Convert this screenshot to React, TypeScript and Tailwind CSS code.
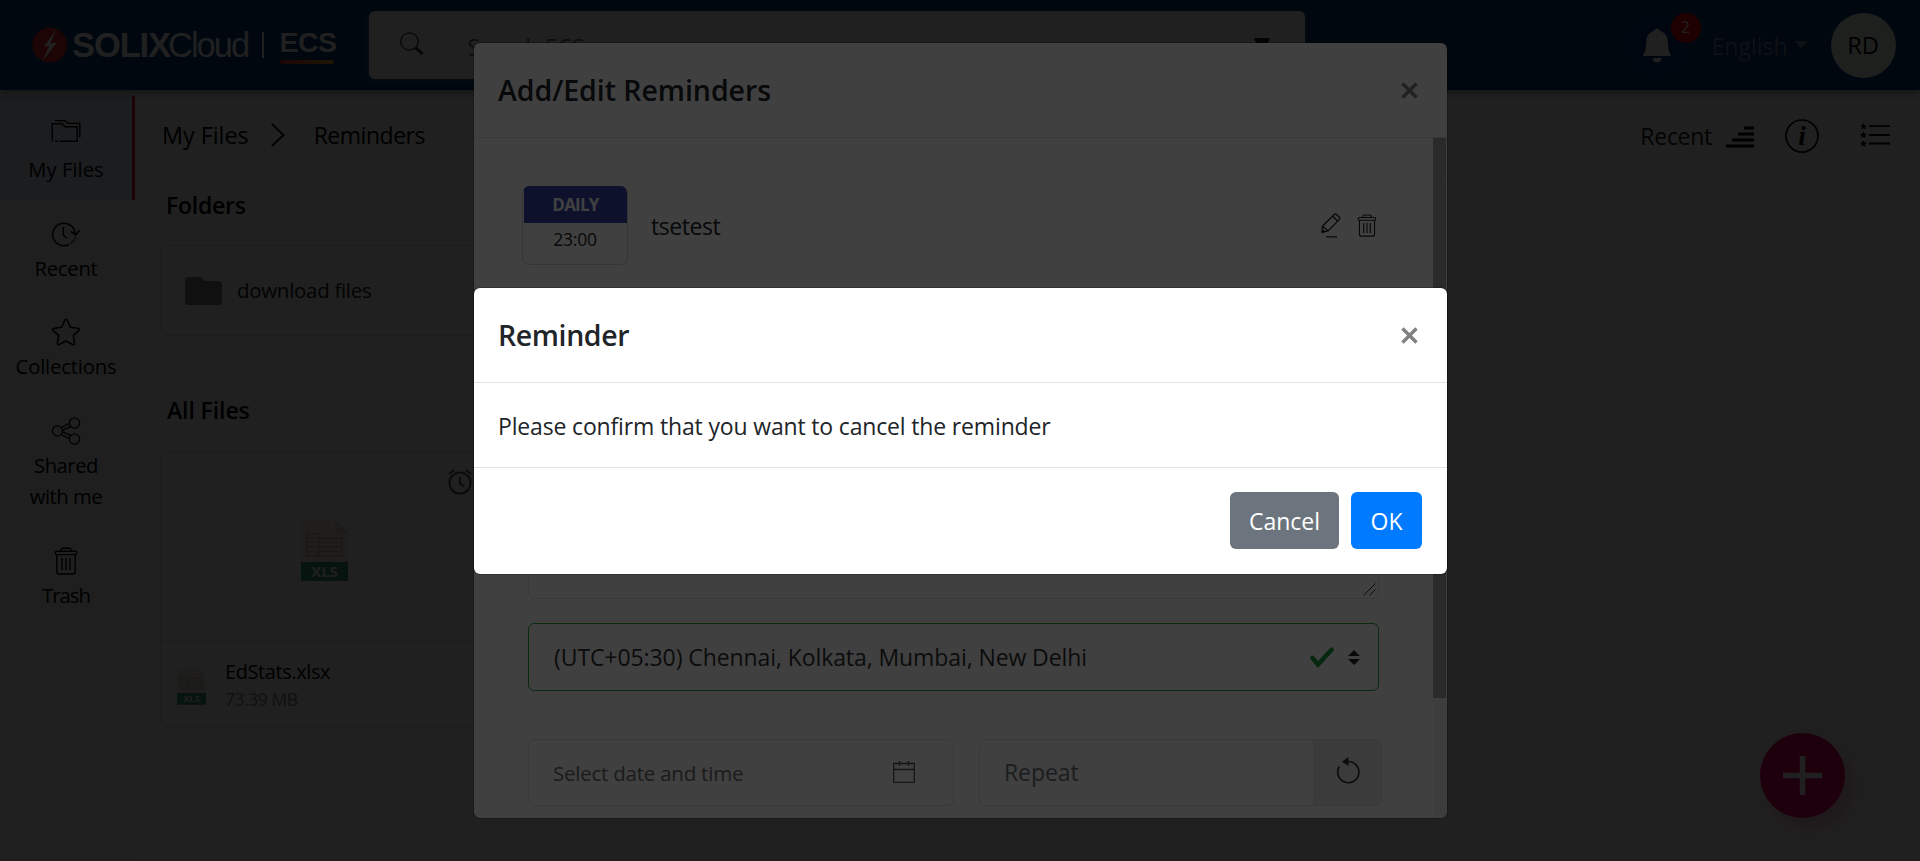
import React from 'react';

type IconProps = { className?: string };

const FolderOutline = ({ className }: IconProps) => (
  <svg className={className} width="30" height="24" viewBox="0 0 30 24" fill="none" stroke="currentColor" strokeWidth="1.4">
    <path d="M1.2 22.5V4.7h9.6l3 3h12.4V22.3H8.5M4 22.3h3" />
    <path d="M4 1.6h9.8l3.2 2.8h11.8v13.8" />
  </svg>
);

const RecentClock = () => (
  <svg width="30" height="26" viewBox="0 0 30 26" fill="none" stroke="currentColor" strokeWidth="1.5">
    <path d="M18.5 23.3A11.3 11.3 0 1 1 24.2 12.6" />
    <path d="M12.3 6v8l3.5 3M20 10.3l4.6 3.6 4-4.6" />
    <path d="M20 22.2l1.4-1M22.3 20.2l1-1.4M24 17.6l.5-1.4" />
  </svg>
);

const Star = () => (
  <svg width="30" height="28" viewBox="0 0 30 28" fill="none" stroke="currentColor" strokeWidth="1.6" strokeLinejoin="round">
    <path d="M15 1.3c.6 0 1 .5 1.3 1.2l3 6.8 7.5 1c1.6.3 2 1.2.9 2.3l-5.400 5.100 1.300 7.400c.2 1.500-.6 2-1.800 1.400L15 23l-6.800 3.500c-1.200.6-2 .1-1.800-1.400l1.300-7.400-5.400-5.100c-1.100-1.100-.7-2 .9-2.300l7.500-1 3-6.800c.3-.7.7-1.200 1.300-1.200z" />
  </svg>
);

const ShareNodes = () => (
  <svg width="30" height="28" viewBox="0 0 30 28" fill="none" stroke="currentColor" strokeWidth="1.3">
    <circle cx="6.500" cy="14" r="5.100" />
    <circle cx="23.500" cy="6" r="5.100" />
    <circle cx="23.500" cy="22" r="5.100" />
    <path d="M10.300 10.500l8.300-4.100M11.500 13.300l8.300-4M11.500 14.700l8.300 4M10.300 17.500l8.300 4.100" />
  </svg>
);

const TrashCan = ({ className }: IconProps) => (
  <svg className={className} width="24" height="28" viewBox="0 0 24 28" fill="none" stroke="currentColor" strokeWidth="1.4">
    <rect x="1.400" y="4.200" width="21.200" height="3.400" rx="1.400" />
    <path d="M7 4.200V3q0-1.800 1.800-1.800h6.400Q17 1.200 17 3v1.200M2.800 7.600V24.500q0 2.500 2.500 2.500h13.400q2.500 0 2.500-2.500V7.600M8 11v12M12 11v12M16 11v12" />
  </svg>
);

const XlsFile = ({ className }: IconProps) => (
  <svg className={className} viewBox="0 0 47 61">
    <path d="M1 0h33l13 13v29H0V1z" fill="#f4f2e6" />
    <path d="M34 0l13 13H34z" fill="#d8d5c4" />
    <path fill="none" stroke="#c4c1b0" strokeWidth="2" d="M6 14h12v22H6zM18 18h23v18H18M6 18h12M6 22.500h35M6 27h35M6 31.500h35" />
    <path d="M0 42h47v17.500q0 1.500-1.500 1.500h-44Q0 61 0 59.500z" fill="#108458" />
    <text x="23.500" y="57" textAnchor="middle" fontSize="15" fontWeight="700" fontFamily="Open Sans, sans-serif" fill="#f0f6ee">XLS</text>
  </svg>
);

const Close = () => (
  <svg width="17" height="17" viewBox="0 0 17 17" stroke="#808080" strokeWidth="3.400" fill="none">
    <path d="M1.500 1.500l14 14M15.500 1.500l-14 14" />
  </svg>
);

function SideItem({ icon, children, className }: { icon: React.ReactNode; children: React.ReactNode; className: string }) {
  return (
    <div className={`flex flex-col items-center text-center text-[20.3px] leading-[31px] ${className}`}>
      <div className="mb-[5px] flex h-7 items-center justify-center">{icon}</div>
      {children}
    </div>
  );
}

function Header() {
  return (
    <header className="relative z-10 flex h-[90px] shrink-0 items-center bg-[#003874] shadow-[0_2px_8px_rgba(0,0,0,0.45)]">
      <svg className="ml-8" width="36" height="36" viewBox="0 0 36 36">
        <circle cx="17.800" cy="18" r="17.500" fill="#e8202a" />
        <path d="M24.500 2L12 19.800l5.200-.8L10.500 34 24.800 15.400l-6.600 1.200z" fill="#fff" />
      </svg>
      <div className="ml-[4px] flex items-baseline font-['Liberation_Sans'] text-[34.500px] leading-[40px] text-white">
        <span className="w-[96px] font-bold tracking-[-1.100px]">SOLIX</span>
        <span className="w-[94px] tracking-[-2px]">Cloud</span>
      </div>
      <div className="h-[26px] w-[1.500px] bg-white" />
      <div className="ml-4 flex h-[38px] w-[56px] flex-col justify-between pt-[6px]">
        <span className="font-['Liberation_Sans'] text-[28.500px] leading-[20px] font-bold tracking-[-0.500px] text-white">ECS</span>
        <span className="h-1 w-[54px] rounded-full bg-gradient-to-r from-[#e8202a] to-[#f0b020]" />
      </div>
      <div className="ml-[33px] flex h-[68px] w-[936px] items-center rounded-md bg-white pl-[31px] shadow-[0_2px_6px_rgba(255,255,255,0.35)]">
        <svg width="24" height="24" viewBox="0 0 24 24" fill="none" stroke="#333" className="mt-[-2px]">
          <circle cx="9.500" cy="9.500" r="8.700" strokeWidth="1.300" />
          <path d="M15.500 15.500l7 6.500" strokeWidth="3" />
        </svg>
        <span className="ml-[44px] pt-[4px] text-[23px] tracking-[-0.200px] text-[#777]">Search ECS</span>
        <svg className="ml-auto mr-[35px] mt-[-3px]" width="16" height="12" viewBox="0 0 16 12">
          <path d="M1.200 0h13.600q1.500 1 .6 2.200L9 10.500q-1 1-2 0L.6 2.200Q-.3 1 1.200 0z" fill="#222" />
        </svg>
      </div>
      <div className="relative ml-[322px] flex size-[60px] items-center justify-center rounded-full bg-[#00307c]">
        <svg width="30" height="36" viewBox="0 0 30 36" fill="#fff" className="mt-px">
          <path d="M15 .5c1.400 0 2.300.9 2.500 2.300 5 1.200 8 5 8.300 10.700.2 6.500.7 10.500 3.700 14.500H.5c3-4 3.500-8 3.700-14.500C4.500 7.800 7.500 4 12.500 2.800 12.700 1.400 13.600.5 15 .5zM10.500 30h9q-.5 4.500-4.500 4.500T10.500 30z" />
        </svg>
        <span className="absolute left-[44px] top-[-2px] flex size-[30px] items-center justify-center rounded-full bg-[#f80000] text-[15.500px] text-white">2</span>
      </div>
      <span className="ml-[25px] pt-[2px] text-[23px] text-[#7886a4]">English</span>
      <svg className="ml-[6px] mt-[-1px]" width="14" height="7" viewBox="0 0 14 7">
        <path d="M0 0h14L7 7z" fill="#7886a4" />
      </svg>
      <div className="ml-[23px] flex size-[65px] items-center justify-center rounded-full bg-[#f4fff4] pt-[2px] text-[23.700px] text-black">RD</div>
    </header>
  );
}

function Sidebar() {
  return (
    <nav className="w-[135px] shrink-0 bg-[#fafafa] pt-1.5 text-black">
      <SideItem className="h-[104px] border-r-[3px] border-[#e01020] bg-[#dce6f4] pt-[25px]" icon={<FolderOutline className="mt-[-9px]" />}>My Files</SideItem>
      <SideItem className="pr-[3px] pt-5 tracking-[-0.270px]" icon={<RecentClock />}>Recent</SideItem>
      <SideItem className="pr-[3px] pt-[34px] tracking-[-0.200px]" icon={<Star />}>Collections</SideItem>
      <SideItem className="pr-[3px] pt-[35px] tracking-[-0.500px]" icon={<ShareNodes />}>
        <span>Shared</span>
        <span>with me</span>
      </SideItem>
      <SideItem className="pr-[3px] pt-[35px] tracking-[-1px]" icon={<TrashCan />}>Trash</SideItem>
    </nav>
  );
}

function Browser() {
  return (
    <main className="flex min-w-0 flex-1 flex-col bg-white pl-[25px] pr-[17px] text-black">
      <div className="flex h-[90px] shrink-0 items-center border-b border-[#ededed]">
        <span className="ml-0.5 pt-[2px] text-[23.300px]">My Files</span>
        <svg className="ml-[22px]" width="14" height="24" viewBox="0 0 14 24" fill="none" stroke="currentColor" strokeWidth="1.800">
          <path d="M.8 .8L12.500 12 .8 23.200" />
        </svg>
        <span className="ml-[29px] pt-[2px] text-[23px] tracking-[-0.480px]">Reminders</span>
        <div className="ml-auto flex items-center">
          <span className="mt-1 text-[23px] tracking-[-0.280px] text-[#222]">Recent</span>
          <svg className="ml-[14px] mt-[5px]" width="28" height="22" viewBox="0 0 28 22">
            <path d="M18 .5h10v3H18zM12 6.500h16v3H12zM6 12.500h22v3H6zM0 18.500h28v3H0z" fill="#000" />
          </svg>
          <svg className="ml-[31px] mt-0.5" width="34" height="34" viewBox="0 0 34 34" fill="none" stroke="#000" strokeWidth="1.700">
            <circle cx="17" cy="17" r="16" />
            <text x="17" y="26" textAnchor="middle" fontSize="27" fontStyle="italic" fontWeight="bold" fontFamily="Liberation Serif, serif" fill="#000" stroke="none">i</text>
          </svg>
          <svg className="ml-[41px] mr-[13px]" width="30" height="24" viewBox="0 0 30 24">
            <path d="M9 3.200h21M9 12h21M9 20.500h21" stroke="#000" strokeWidth="1.800" />
            {[3.400, 12, 20.600].map((y) => (
              <path key={y} transform={`translate(3.500 ${y})`} d="M0-3.600L1-1.200l2.500.2-1.900 1.600.6 2.500L0 1.800l-2.200 1.300.6-2.500L-3.500-1-1-1.200z" fill="#000" />
            ))}
          </svg>
        </div>
      </div>
      <h2 className="ml-[6px] mt-[9px] h-[32px] text-[23px] leading-[32px] font-semibold tracking-[-0.230px]">Folders</h2>
      <div className="mt-[24px] flex h-[91px] w-[329px] shrink-0 items-center rounded-lg border border-[#e4e4e4] pl-[24px]">
        <svg width="37" height="28" viewBox="0 0 37 28" fill="#808080">
          <path d="M3 0h12.500l4 4H34q3 0 3 3v18q0 3-3 3H3q-3 0-3-3V3Q0 0 3 0z" />
        </svg>
        <span className="ml-[15px] text-[20.500px] tracking-[-0.300px] text-[#222]">download files</span>
      </div>
      <h2 className="ml-[7px] mt-[58px] h-[32px] text-[23px] leading-[32px] font-semibold tracking-[-0.100px]">All Files</h2>
      <div className="mt-[25px] flex h-[276px] w-[329px] shrink-0 flex-col rounded-lg border border-[#e4e4e4]">
        <div className="relative flex h-[190px] items-center justify-center border-b border-[#e4e4e4]">
          <XlsFile className="mt-[8px] h-[61px] w-[47px] opacity-80" />
          <svg className="absolute right-4 top-[17px]" width="24" height="26" viewBox="0 0 24 26" fill="none" stroke="#555" strokeWidth="2">
            <circle cx="12" cy="14" r="10.500" />
            <path d="M12 8v6.500l4.500 3M1 5l5-4M18 1l5 4" />
          </svg>
        </div>
        <div className="flex flex-1 pl-[16px] pt-[25px]">
          <XlsFile className="h-[38px] w-[29px] opacity-80" />
          <div className="ml-[19px] mt-[-9px]">
            <p className="text-[20px] leading-[28px] tracking-[-0.400px]">EdStats.xlsx</p>
            <p className="text-[17.500px] leading-[27px] tracking-[-0.450px] text-[#888]">73.39 MB</p>
          </div>
        </div>
      </div>
    </main>
  );
}

function RemindersModal() {
  return (
    <section className="absolute left-[473px] top-[42px] flex h-[777px] w-[975px] flex-col overflow-hidden rounded-[7px] border border-black/20 bg-white bg-clip-padding text-[#212529]">
      <header className="flex h-[95px] shrink-0 items-center justify-between border-b border-[#dee2e6] pl-6 pr-[29px]">
        <h3 className="pt-px text-[28.500px] font-semibold tracking-[-0.050px]">Add/Edit Reminders</h3>
        <Close />
      </header>
      <div className="flex min-h-0 flex-1">
        <div className="flex flex-1 flex-col pl-12 pt-12">
          <div className="flex h-[79px] shrink-0 items-center">
            <div className="flex h-[79px] w-[106px] flex-col overflow-hidden rounded-[7px] border border-t-0 border-[#d2d4d8] text-center">
              <div className="ml-px h-[37px] bg-[#3645b0] pt-[3px] text-[17px] leading-[31px] font-bold tracking-[-0.750px] text-white">DAILY</div>
              <div className="pt-px text-[17.500px] leading-[31px] tracking-[-0.200px]">23:00</div>
            </div>
            <span className="ml-[23px] pt-[2px] text-[23px] tracking-[-0.460px]">tsetest</span>
            <svg className="ml-auto" width="20" height="25" viewBox="0 0 20 25" fill="none" stroke="#222" strokeWidth="1.300">
              <path d="M1 19.500L1.500 13 13.300 1.500q1-1 2.300 0l2.700 2.700q1.200 1.200.2 2.200L7 18zM11.800 3.300l5 5M1.500 13l5.500 5M1 16.500l3 2.700" />
              <path d="M5 23.800h11" />
            </svg>
            <TrashCan className="ml-[16px] mr-[56px] h-[23px] w-[20px] text-[#222]" />
          </div>
          <div className="relative ml-1.5 mt-[50px] h-[284px] w-[851px] shrink-0 rounded-[6px] border border-[#dfe2e6]">
            <svg className="absolute bottom-[2px] right-[2px]" width="13" height="13" viewBox="0 0 13 13" stroke="#333" strokeWidth="1">
              <path d="M.5 12.500l12-12M6.500 12.500l6-6" />
            </svg>
          </div>
          <div className="ml-1.5 mt-6 flex h-[68px] w-[851px] shrink-0 items-center rounded-[6px] border border-[#28a745] pl-[25px] pr-[18px]">
            <span className="pt-px text-[23px] tracking-[-0.085px] text-[#333]">(UTC+05:30) Chennai, Kolkata, Mumbai, New Delhi</span>
            <svg className="ml-auto" width="24" height="21" viewBox="0 0 24 21">
              <path d="M2.500 11l5.500 6.500L21.500 2.800" fill="none" stroke="#1fa040" strokeWidth="4.600" strokeLinecap="round" strokeLinejoin="miter" />
            </svg>
            <svg className="ml-[14px]" width="12" height="15" viewBox="0 0 12 15" fill="#222">
              <path d="M0 6l6-6 6 6zM0 9h12l-6 6z" />
            </svg>
          </div>
          <div className="ml-1.5 mt-12 flex h-[67px] shrink-0">
            <div className="flex h-full w-[426px] items-center justify-between rounded-[6px] border border-[#dfe2e6] pl-[24px] pr-[38px]">
              <span className="pt-px text-[20.500px] tracking-[-0.230px] text-[#6c6c6c]">Select date and time</span>
              <svg width="22" height="22" viewBox="0 0 22 22" fill="none" stroke="#555" strokeWidth="1.300" className="mt-[-1px]">
                <path d="M.7 2.500h20.600v18.800H.7zM.7 8.500h20.600M6.500 0v5M15.500 0v5" />
              </svg>
            </div>
            <div className="ml-[25px] flex h-full w-[403px] overflow-hidden rounded-[6px] border border-[#dfe2e6]">
              <span className="flex flex-1 items-center pl-[24px] text-[23px] tracking-[-0.100px] text-[#6c757d]">Repeat</span>
              <span className="flex w-[68px] items-center justify-center border-l border-[#dfe2e6] bg-[#e9ecef]">
                <svg width="24" height="27" viewBox="0 0 24 27" className="mt-[-5px]">
                  <path d="M3.300 9.500A10.600 10.600 0 1 0 12 4.500" fill="none" stroke="#333" strokeWidth="1.700" />
                  <path d="M6 4.800L12.500 0v9z" fill="#333" />
                </svg>
              </span>
            </div>
          </div>
        </div>
        <div className="mr-px w-[13px] shrink-0 bg-[#f1f1f1]">
          <div className="h-[560px] bg-[#a6a6a6]" />
        </div>
      </div>
    </section>
  );
}

function ConfirmModal() {
  return (
    <section className="absolute left-[473px] top-[287px] w-[975px] overflow-hidden rounded-[7px] border border-black/20 bg-white bg-clip-padding text-[#212529]">
      <header className="flex h-[95px] items-center justify-between border-b border-[#dee2e6] pl-6 pr-[29px]">
        <h3 className="text-[28.500px] font-semibold tracking-[-0.400px]">Reminder</h3>
        <Close />
      </header>
      <p className="flex h-[85px] items-center border-b border-[#dee2e6] pl-[24px] pt-[2px] text-[23px] tracking-[-0.160px]">
        Please confirm that you want to cancel the reminder
      </p>
      <footer className="flex h-[106px] justify-end gap-3 pr-[25px] pt-6 text-white">
        <button className="h-[57px] w-[109px] rounded-[6px] bg-[#6c757d] pt-[2px] text-[23px]">Cancel</button>
        <button className="h-[57px] w-[71px] rounded-[6px] bg-[#007bff] pt-[2px] text-[23px]">OK</button>
      </footer>
    </section>
  );
}

export default function App() {
  return (
    <div className="relative flex h-[861px] w-full flex-col overflow-hidden bg-white font-['Open_Sans',sans-serif]">
      <Header />
      <div className="flex min-h-0 flex-1">
        <Sidebar />
        <Browser />
      </div>
      <button className="absolute left-[1760px] top-[733px] flex size-[85px] items-center justify-center rounded-full bg-[#ee0060] shadow-[8px_10px_18px_rgba(238,0,96,0.25)]">
        <svg width="39" height="39" viewBox="0 0 39 39" stroke="#fff" strokeWidth="5.500">
          <path d="M0 19.500h39M19.500 0v39" />
        </svg>
      </button>
      <div className="absolute inset-0 z-20 bg-black/50" />
      <div className="absolute inset-0 z-30">
        <RemindersModal />
      </div>
      <div className="absolute inset-0 z-40 bg-black/75" />
      <div className="absolute inset-0 z-50">
        <ConfirmModal />
      </div>
    </div>
  );
}
